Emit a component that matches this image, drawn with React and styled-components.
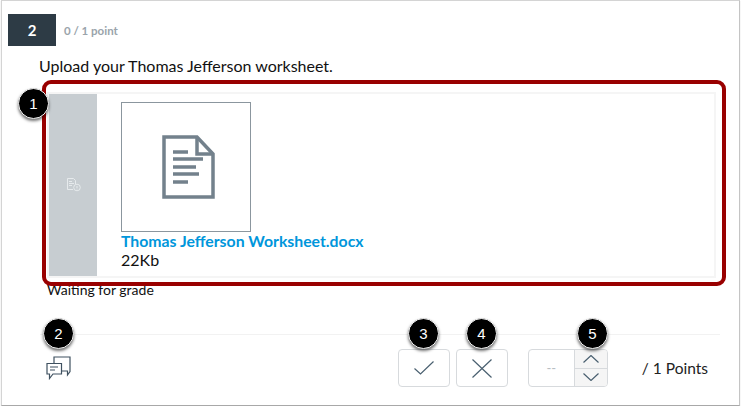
import React from "react";
import styled, { createGlobalStyle } from "styled-components";

const GlobalStyle = createGlobalStyle`
  html, body {
    margin: 0;
    padding: 0;
    background: #ffffff;
    font-family: "Lato", "Liberation Sans", sans-serif;
    color: #111111;
  }
`;

const Frame = styled.div`
  position: relative;
  box-sizing: border-box;
  width: 739px;
  height: 406px;
  margin-left: 1px;
  background: #ffffff;
  border: 1px solid #d4d4d4;
  border-right-color: #c4c4c4;
  border-bottom-color: #a8a8a8;
  box-shadow: 0 1px 1px rgba(0, 0, 0, 0.2);
`;

const Header = styled.div`
  display: flex;
  align-items: center;
  gap: 8px;
  margin: 13px 0 0 6px;
`;

const NumberBadge = styled.div`
  width: 48px;
  height: 32px;
  display: flex;
  align-items: center;
  justify-content: center;
  background: #2d3b45;
  color: #ffffff;
  font-size: 15px;
  font-weight: 700;
`;

const Score = styled.span`
  font-size: 11.5px;
  font-weight: 700;
  color: #9aa4ab;
`;

const Question = styled.p`
  margin: 10px 0 0 37px;
  font-size: 16px;
  line-height: 20px;
`;

const Card = styled.div`
  position: relative;
  box-sizing: border-box;
  display: flex;
  width: 669px;
  height: 186px;
  margin: 16px 0 0 45px;
  border: 2px solid #f5f5f5;
`;

const Highlight = styled.div`
  position: absolute;
  top: -14px;
  left: -7px;
  right: -12px;
  bottom: -10px;
  border: 4px solid #990000;
  border-radius: 9px;
`;

const SideBar = styled.div`
  width: 48px;
  display: flex;
  align-items: center;
  justify-content: center;
  background: #c7cdd1;
`;

const Attachment = styled.div`
  padding: 8px 0 0 24px;
`;

const Preview = styled.div`
  box-sizing: border-box;
  width: 130px;
  height: 130px;
  padding-left: 5px;
  display: flex;
  align-items: center;
  justify-content: center;
  border: 1px solid #8b969e;
`;

const FileLink = styled.a`
  display: block;
  margin-top: -1px;
  font-size: 15.8px;
  font-weight: 700;
  line-height: 19px;
  color: #0096db;
  text-decoration: none;
`;

const FileSize = styled.div`
  font-size: 16px;
  line-height: 19px;
`;

const Status = styled.div`
  margin: 4px 0 0 45px;
  font-size: 14px;
  line-height: 16px;
`;

const Footer = styled.div`
  display: flex;
  align-items: flex-start;
  margin: 36px 0 0 38px;
  width: 680px;
  padding: 14px 12px 0 6px;
  box-sizing: border-box;
  border-top: 1px solid #f2f2f2;
`;

const CommentButton = styled.div`
  margin: 7px auto 0 0;
  display: flex;
`;

const GradeButton = styled.div`
  box-sizing: border-box;
  width: 52px;
  height: 38px;
  margin-right: ${(props) => props.$gap}px;
  display: flex;
  align-items: center;
  justify-content: center;
  border: 1px solid #d7dadd;
  border-radius: 4px;
`;

const Spinner = styled.div`
  box-sizing: border-box;
  width: 80px;
  height: 38px;
  display: flex;
  border: 1px solid #d7dadd;
  border-radius: 4px;
  overflow: hidden;
`;

const SpinnerValue = styled.div`
  flex: 1;
  display: flex;
  align-items: center;
  justify-content: center;
  font-size: 13px;
  color: #b8bec3;
`;

const SpinnerArrows = styled.div`
  width: 32px;
  display: flex;
  flex-direction: column;
  background: #f5f5f5;
  border-left: 1px solid #d7dadd;
`;

const SpinnerArrow = styled.div`
  flex: 1;
  display: flex;
  align-items: center;
  justify-content: center;
  & + & {
    border-top: 1px solid #d7dadd;
  }
`;

const Points = styled.div`
  margin-left: 34px;
  font-size: 15.5px;
  line-height: 38px;
  color: #222222;
`;

const Callout = styled.div`
  position: absolute;
  left: ${(props) => props.$x - 17}px;
  top: ${(props) => props.$y - 16}px;
  box-sizing: border-box;
  width: 31px;
  height: 31px;
  display: flex;
  align-items: center;
  justify-content: center;
  background: #000000;
  border: 1px solid #f0f0f0;
  border-radius: 50%;
  box-shadow: 0 2px 3px rgba(0, 0, 0, 0.55);
  color: #ffffff;
  font-family: "Liberation Sans", sans-serif;
  font-size: 15px;
`;

const DocIcon = () => (
  <svg width="53" height="64" viewBox="0 0 53 64" fill="none" stroke="#73818c" strokeWidth="3.5">
    <path d="M2 2H35L51 19V62H2Z" />
    <path d="M35 2V19H51" />
    <path d="M11 17H26M11 24H41M11 32H34M11 39H37M11 47H26" />
  </svg>
);

const GradeIcon = () => (
  <svg width="15" height="14" viewBox="0 0 15 14" fill="none" stroke="#e6eaec" strokeWidth="1">
    <path d="M7 11.5H1.5V0.5H7.5L9.5 2.5V6" />
    <path d="M3 3.5H6M3 5.5H8M3 7.5H6" />
    <circle cx="11" cy="9.5" r="3.3" />
    <path d="M11 8V10M11 10.6V11.4" />
  </svg>
);

const CommentIcon = () => (
  <svg width="25" height="24" viewBox="0 0 25 24" fill="none" stroke="#3f5160" strokeWidth="1.2">
    <path d="M1 7.5H15.5V18H7L3.5 22.5V18H1Z" />
    <path d="M8 7V1H24V15.5L21.5 19V15H15.5" />
    <path d="M4 11H12M4 14H9" />
  </svg>
);

const CheckIcon = () => (
  <svg width="20" height="14" viewBox="0 0 20 14" fill="none" stroke="#4a6070" strokeWidth="1.2">
    <path d="M0.5 7.5L6.5 13L19.5 0.5" />
  </svg>
);

const CrossIcon = () => (
  <svg width="20" height="19" viewBox="0 0 20 19" fill="none" stroke="#4a6070" strokeWidth="1.2">
    <path d="M0.5 0.5L19.5 18.5M19.5 0.5L0.5 18.5" />
  </svg>
);

const Chevron = ({ up }) => (
  <svg width="16" height="8" viewBox="0 0 16 8" fill="none" stroke="#4a6070" strokeWidth="1.2">
    <path d={up ? "M0.5 7.5L8 0.5L15.5 7.5" : "M0.5 0.5L8 7.5L15.5 0.5"} />
  </svg>
);

const App = () => {
  return (
    <>
      <GlobalStyle />
      <Frame>
        <Header>
          <NumberBadge>2</NumberBadge>
          <Score>0 / 1 point</Score>
        </Header>
        <Question>Upload your Thomas Jefferson worksheet.</Question>
        <Card>
          <SideBar>
            <GradeIcon />
          </SideBar>
          <Attachment>
            <Preview>
              <DocIcon />
            </Preview>
            <FileLink href="#">Thomas Jefferson Worksheet.docx</FileLink>
            <FileSize>22Kb</FileSize>
          </Attachment>
          <Highlight />
        </Card>
        <Status>Waiting for grade</Status>
        <Footer>
          <CommentButton>
            <CommentIcon />
          </CommentButton>
          <GradeButton $gap={6}>
            <CheckIcon />
          </GradeButton>
          <GradeButton $gap={20}>
            <CrossIcon />
          </GradeButton>
          <Spinner>
            <SpinnerValue>--</SpinnerValue>
            <SpinnerArrows>
              <SpinnerArrow>
                <Chevron up />
              </SpinnerArrow>
              <SpinnerArrow>
                <Chevron />
              </SpinnerArrow>
            </SpinnerArrows>
          </Spinner>
          <Points>/ 1 Points</Points>
        </Footer>
        <Callout $x={33} $y={103}>1</Callout>
        <Callout $x={58} $y={333}>2</Callout>
        <Callout $x={423} $y={333}>3</Callout>
        <Callout $x={481} $y={333}>4</Callout>
        <Callout $x={592} $y={333}>5</Callout>
      </Frame>
    </>
  );
};

export default App;
